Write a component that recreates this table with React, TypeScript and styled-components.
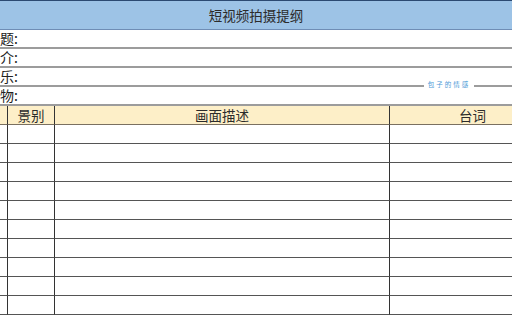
import React from "react";
import styled, { createGlobalStyle } from "styled-components";

const Global = createGlobalStyle`
  html, body { margin: 0; padding: 0; background: #ffffff; overflow: hidden; }
  body { font-family: "Noto Sans CJK SC", "Noto Sans", sans-serif; color: #333; }
`;

const Sheet = styled.div`
  position: relative;
  width: 512px;
  height: 317px;
  overflow: hidden;
  background: #fff;
`;

const TitleBar = styled.div`
  height: 28px;
  border-top: 1px solid #2c4a72;
  border-bottom: 1px solid #6f8db5;
  background: #9dc3e6;
  display: flex;
  align-items: center;
  justify-content: center;
  font-size: 13.5px;
  color: #2b2b2b;
`;

const InfoRow = styled.div`
  height: 17px;
  border-bottom: 2px solid #9c9c9c;
  display: flex;
  align-items: center;
`;

const InfoLabel = styled.span`
  font-size: 14px;
  line-height: 17px;
  color: #222;
  white-space: nowrap;
`;

const Grid = styled.div`
  width: 556px;
  display: grid;
  grid-template-columns: 8px 47px 335px 166px;
`;

const Cell = styled.div<{ $head?: boolean }>`
  box-sizing: border-box;
  height: 19px;
  border-right: 1px solid #333;
  border-bottom: 1px solid ${(p) => (p.$head ? "#7a7060" : "#555")};
  background: ${(p) => (p.$head ? "#fdefc8" : "#ffffff")};
  display: flex;
  align-items: center;
  justify-content: center;
  font-size: 13.5px;
  color: #2b2b2b;
  overflow: hidden;
  white-space: nowrap;
`;

const Watermark = styled.div`
  position: absolute;
  left: 424px;
  top: 79px;
  width: 50px;
  height: 10px;
  background: #ffffff;
  display: flex;
  align-items: center;
  justify-content: center;
  font-size: 6.5px;
  letter-spacing: 2px;
  color: #4a98d6;
`;

const headers = ["", "景别", "画面描述", "台词"];
const infos = ["题:", "介:", "乐:", "物:"];

export default function App() {
  return (
    <>
      <Global />
      <Sheet>
        <TitleBar>短视频拍摄提纲</TitleBar>
        {infos.map((t) => (
          <InfoRow key={t}>
            <InfoLabel>{t}</InfoLabel>
          </InfoRow>
        ))}
        <Grid>
          {headers.map((h, i) => (
            <Cell key={`h${i}`} $head>
              {h}
            </Cell>
          ))}
          {Array.from({ length: 10 }).map((_, r) =>
            headers.map((_h, c) => <Cell key={`${r}-${c}`} />)
          )}
        </Grid>
        <Watermark>包子的情感</Watermark>
      </Sheet>
    </>
  );
}
